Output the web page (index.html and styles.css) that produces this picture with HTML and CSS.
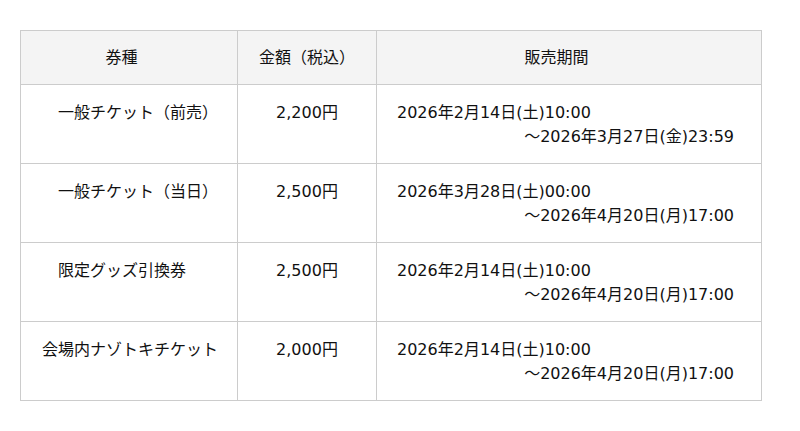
FILE: index.html
```html
<!DOCTYPE html>
<html lang="ja">
<head>
<meta charset="utf-8">
<title>券種</title>
<link rel="stylesheet" href="styles.css">
</head>
<body>
<div class="wrap">
  <table class="tickets">
    <colgroup>
      <col class="c-type">
      <col class="c-price">
      <col class="c-period">
    </colgroup>
    <thead>
      <tr>
        <th class="h-type">券種</th>
        <th class="h-price">金額（税込）</th>
        <th class="h-period">販売期間</th>
      </tr>
    </thead>
    <tbody>
      <tr>
        <td class="type indent">一般チケット（前売）</td>
        <td class="price">2,200円</td>
        <td class="period"><div class="from">2026年2月14日(土)10:00</div><div class="to">～2026年3月27日(金)23:59</div></td>
      </tr>
      <tr>
        <td class="type indent">一般チケット（当日）</td>
        <td class="price">2,500円</td>
        <td class="period"><div class="from">2026年3月28日(土)00:00</div><div class="to">～2026年4月20日(月)17:00</div></td>
      </tr>
      <tr>
        <td class="type indent">限定グッズ引換券</td>
        <td class="price">2,500円</td>
        <td class="period"><div class="from">2026年2月14日(土)10:00</div><div class="to">～2026年4月20日(月)17:00</div></td>
      </tr>
      <tr>
        <td class="type">会場内ナゾトキチケット</td>
        <td class="price">2,000円</td>
        <td class="period"><div class="from">2026年2月14日(土)10:00</div><div class="to">～2026年4月20日(月)17:00</div></td>
      </tr>
    </tbody>
  </table>
</div>
</body>
</html>
```
FILE: styles.css
```css
html, body {
  margin: 0;
  padding: 0;
  background: #ffffff;
}
body {
  font-family: "DejaVu Sans", "Noto Sans CJK JP", sans-serif;
  font-size: 16px;
  line-height: 24px;
  color: #111111;
}
.wrap {
  padding: 30px 0 0 20px;
}
.tickets {
  border-collapse: collapse;
  width: 741px;
  table-layout: fixed;
}
.c-type { width: 217px; }
.c-price { width: 139px; }
.c-period { width: 385px; }
.tickets th,
.tickets td {
  border: 1px solid #cccccc;
  vertical-align: top;
  box-sizing: border-box;
}
.tickets th {
  background: #f4f4f4;
  font-weight: normal;
  text-align: center;
  height: 54px;
  padding: 15px 0 0 0;
}
.tickets th.h-type { padding-right: 15px; }
.tickets th.h-period { padding-right: 25px; }
.tickets td {
  height: 79px;
  padding: 16px 0 0 0;
}
.tickets td.type {
  text-align: left;
  padding-left: 21px;
  white-space: nowrap;
}
.tickets td.type.indent {
  padding-left: 37px;
}
.tickets td.price {
  text-align: center;
}
.tickets td.period {
  padding-left: 20px;
  padding-right: 27px;
}
.from {
  text-align: left;
}
.to {
  text-align: right;
}
```
